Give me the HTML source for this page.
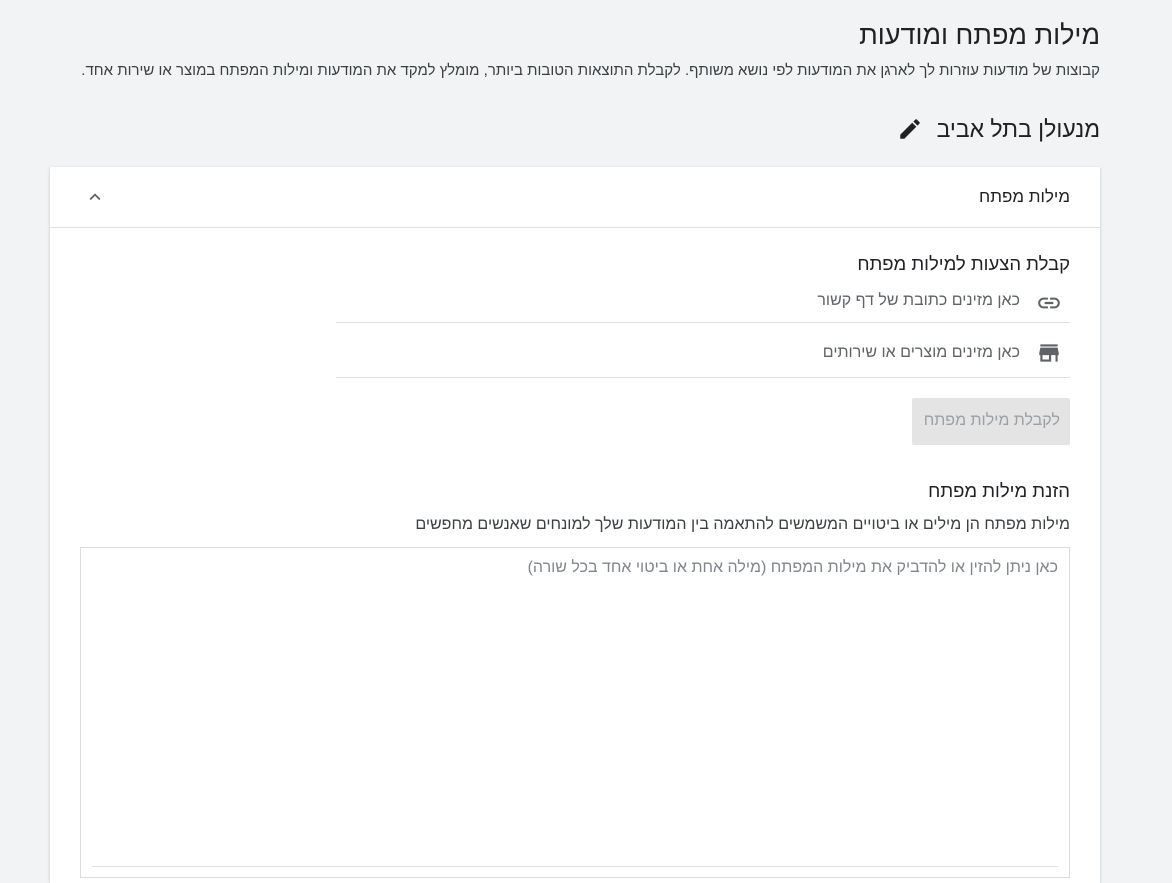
<!DOCTYPE html>
<html><head><meta charset="utf-8"><style>
html,body{margin:0;width:1172px;height:883px;overflow:hidden}
body{background:#f1f3f4;font-family:"Liberation Sans","Noto Sans CJK SC",sans-serif;color:#202124;position:relative}
.a{position:absolute;white-space:nowrap;direction:rtl}
.card{position:absolute;left:50px;top:167px;width:1050px;height:716px;background:#fff;box-shadow:0 1px 3px rgba(0,0,0,.2)}
.hr{position:absolute;height:1px;background:#e0e0e0}
</style></head><body>
<div class="a" style="right:72px;top:20px;font-size:27px;">מילות מפתח ומודעות</div>
<div class="a" style="right:72px;top:62px;font-size:15px;color:#3c4043">קבוצות של מודעות עוזרות לך לארגן את המודעות לפי נושא משותף. לקבלת התוצאות הטובות ביותר, מומלץ למקד את המודעות ומילות המפתח במוצר או שירות אחד.</div>
<div class="a" style="right:72px;top:116px;font-size:23px;">מנעולן בתל אביב</div>
<svg class="a" style="left:897px;top:116px" width="26" height="26" viewBox="0 0 24 24"><path fill="#202124" d="M3 17.25V21h3.75L17.81 9.94l-3.75-3.75L3 17.25zM20.71 7.04a1 1 0 000-1.41l-2.34-2.34a1 1 0 00-1.41 0l-1.83 1.83 3.75 3.75 1.83-1.83z"/></svg>
<div class="card">
<div class="a" style="right:30px;top:20px;font-size:17px;">מילות מפתח</div>
<svg class="a" style="left:34px;top:19px" width="22" height="22" viewBox="0 0 24 24"><path fill="#5f6368" d="M7.41 15.41L12 10.83l4.59 4.58L18 14l-6-6-6 6z"/></svg>
<div class="hr" style="left:0;right:0;top:60px"></div>
<div class="a" style="right:30px;top:86px;font-size:18.5px;">קבלת הצעות למילות מפתח</div>
<div class="a" style="right:80px;top:125px;font-size:16px;color:#5f6368">כאן מזינים כתובת של דף קשור</div>
<svg class="a" style="left:986px;top:123px" width="26" height="26" viewBox="0 0 24 24"><path fill="#5f6368" d="M3.9 12c0-1.71 1.39-3.1 3.1-3.1h4V7H7c-2.76 0-5 2.24-5 5s2.24 5 5 5h4v-1.9H7c-1.71 0-3.1-1.39-3.1-3.1zM8 13h8v-2H8v2zm9-6h-4v1.9h4c1.71 0 3.1 1.39 3.1 3.1s-1.39 3.1-3.1 3.1h-4V17h4c2.76 0 5-2.24 5-5s-2.24-5-5-5z"/></svg>
<div class="hr" style="left:286px;right:30px;top:155px"></div>
<div class="a" style="right:80px;top:177px;font-size:16px;color:#5f6368">כאן מזינים מוצרים או שירותים</div>
<svg class="a" style="left:986px;top:173px" width="26" height="26" viewBox="0 0 24 24"><path fill="#5f6368" d="M20 4H4v2h16V4zm1 10v-2l-1-5H4l-1 5v2h1v6h10v-6h4v6h2v-6h1zm-9 4H6v-4h6v4z"/></svg>
<div class="hr" style="left:286px;right:30px;top:210px"></div>
<div style="position:absolute;left:862px;top:231px;width:158px;height:47px;background:#e4e4e4;border-radius:2px"></div>
<div class="a" style="right:40px;top:245px;font-size:16px;color:#9aa0a6">לקבלת מילות מפתח</div>
<div class="a" style="right:30px;top:313px;font-size:18.5px;">הזנת מילות מפתח</div>
<div class="a" style="right:30px;top:349px;font-size:16px;color:#3c4043">מילות מפתח הן מילים או ביטויים המשמשים להתאמה בין המודעות שלך למונחים שאנשים מחפשים</div>
<div style="position:absolute;left:30px;top:380px;width:988px;height:329px;border:1px solid #dadce0"></div>
<div class="hr" style="left:42px;width:966px;top:699px"></div>
<div class="a" style="right:42px;top:392px;font-size:16px;color:#80868b">כאן ניתן להזין או להדביק את מילות המפתח (מילה אחת או ביטוי אחד בכל שורה)</div>
</div>
</body></html>
